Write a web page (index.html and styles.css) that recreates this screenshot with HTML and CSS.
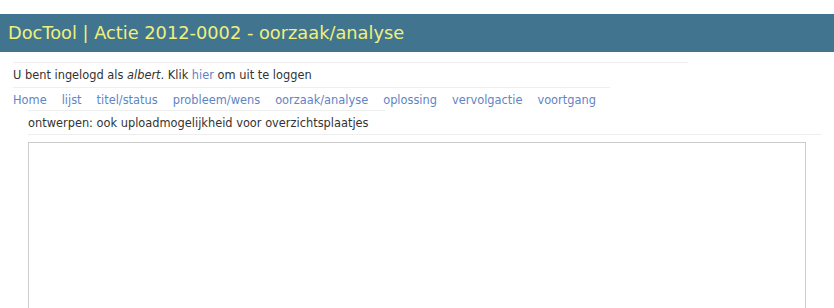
FILE: index.html
```
<!DOCTYPE html>
<html lang="nl">
<head>
    <meta charset="UTF-8">
    <title>DocTool | Actie 2012-0002 - oorzaak/analyse</title>
    <link rel="stylesheet" href="styles.css">
</head>
<body>
    <div class="header">DocTool | Actie 2012-0002 - oorzaak/analyse</div>

    <div class="login">U bent ingelogd als <em>albert</em>. Klik <a href="#">hier</a> om uit te loggen</div>

    <div class="nav">
        <a href="#">Home</a>
        <a href="#">lijst</a>
        <a href="#">titel/status</a>
        <a href="#">probleem/wens</a>
        <a href="#">oorzaak/analyse</a>
        <a href="#">oplossing</a>
        <a href="#">vervolgactie</a>
        <a href="#">voortgang</a>
    </div>

    <div class="content">
        <div class="rule"></div>
        <div class="subtitle">ontwerpen: ook uploadmogelijkheid voor overzichtsplaatjes</div>
        <div class="editor"></div>
    </div>
</body>
</html>
```

FILE: styles.css
```
body {
    margin: 0;
    padding: 0;
    font-family: "DejaVu Sans", Verdana, sans-serif;
    font-size: 11.4px;
    color: #333333;
    background: #ffffff;
    overflow: hidden;
}

a {
    color: #5f84c4;
    text-decoration: none;
}

.header {
    margin-top: 14px;
    height: 38px;
    line-height: 38px;
    padding-left: 8px;
    background: #41748f;
    color: #f0f07c;
    font-size: 17.8px;
}

.login {
    margin: 10px 0 0 13px;
    width: 675px;
    height: 24px;
    line-height: 24px;
    border-top: 1px solid #eeeeee;
}

.nav {
    margin-left: 13px;
    width: 597px;
    height: 22px;
    line-height: 24px;
    border-top: 1px solid #eeeeee;
    display: flex;
    gap: 15px;
}

.content {
    margin-left: 28px;
}

.rule {
    width: 357px;
    border-top: 1px solid #eeeeee;
}

.subtitle {
    width: 794px;
    height: 23px;
    line-height: 25px;
    border-bottom: 1px solid #eeeeee;
}

.editor {
    margin-top: 7px;
    width: 776px;
    height: 166px;
    border: 1px solid #cccccc;
    border-bottom: none;
}
```
